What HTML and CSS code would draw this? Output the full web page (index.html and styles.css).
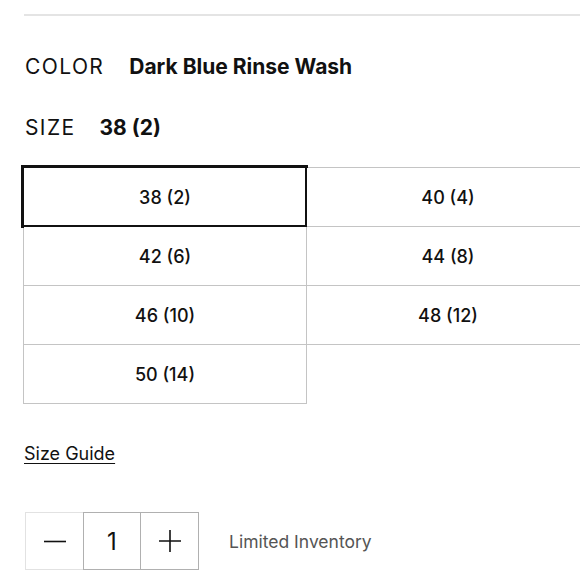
FILE: index.html
```html
<!DOCTYPE html>
<html>
<head>
<meta charset="utf-8">
<link rel="stylesheet" href="styles.css">
</head>
<body>
<div class="page">
  <hr class="rule">
  <div class="attr attr-color">
    <span class="attr-label">COLOR</span>
    <span class="attr-value">Dark Blue Rinse Wash</span>
  </div>
  <div class="attr attr-size">
    <span class="attr-label">SIZE</span>
    <span class="attr-value">38 (2)</span>
  </div>
  <div class="sizes">
    <button class="size selected">38 (2)</button>
    <button class="size">40 (4)</button>
    <button class="size">42 (6)</button>
    <button class="size">44 (8)</button>
    <button class="size">46 (10)</button>
    <button class="size">48 (12)</button>
    <button class="size">50 (14)</button>
  </div>
  <a class="guide" href="#">Size Guide</a>
  <div class="qty-row">
    <div class="qty">
      <button class="qty-btn minus" aria-label="decrease">
        <svg width="22" height="22" viewBox="0 0 22 22"><path d="M0 11.5H22" stroke="#111" stroke-width="1.6"/></svg>
      </button>
      <div class="qty-val">1</div>
      <button class="qty-btn plus" aria-label="increase">
        <svg width="22" height="22" viewBox="0 0 22 22"><path d="M0 11H22M11 0V22" stroke="#111" stroke-width="1.6"/></svg>
      </button>
    </div>
    <span class="stock">Limited Inventory</span>
  </div>
</div>
</body>
</html>
```
FILE: styles.css
```css
html, body {
  margin: 0;
  padding: 0;
  overflow: hidden;
  background: #fff;
}

body {
  font-family: Inter, Roboto, "Liberation Sans", sans-serif;
  color: #111;
}

.page {
  width: 620px;
  padding-left: 23px;
  padding-top: 14px;
}

.rule {
  margin: 0 0 0 1px;
  border: 0;
  height: 2px;
  background: #e4e4e4;
}

.attr {
  display: flex;
  align-items: baseline;
  gap: 25px;
  font-size: 21px;
  line-height: 24px;
}

.attr-color {
  margin-top: 39px;
}

.attr-size {
  margin-top: 37px;
  gap: 24px;
}

.attr-label {
  padding-left: 2px;
  letter-spacing: 1.4px;
  font-weight: 400;
}

.attr-value {
  font-weight: 700;
  font-size: 21px;
}

.sizes {
  margin-top: 27px;
  display: grid;
  grid-template-columns: 283px 283px;
  grid-auto-rows: 59px;
  border-top: 1px solid #c4c4c4;
  border-left: 1px solid #c4c4c4;
  width: max-content;
}

.size {
  position: relative;
  margin: 0;
  padding: 0;
  background: #fff;
  border: 0;
  border-right: 1px solid #c4c4c4;
  border-bottom: 1px solid #c4c4c4;
  font-family: inherit;
  font-size: 18px;
  font-weight: 500;
  color: #111;
  cursor: pointer;
}

.size.selected::after {
  content: "";
  position: absolute;
  top: -3px;
  left: -3px;
  right: -2px;
  bottom: -2px;
  border: 3px solid #111;
}

.guide {
  display: inline-block;
  margin-top: 39px;
  margin-left: 1px;
  font-size: 18px;
  color: #111;
  text-decoration: underline;
  text-underline-offset: 3px;
  text-decoration-thickness: 1px;
}

.qty-row {
  margin-top: 48px;
  display: flex;
  align-items: center;
  gap: 30px;
}

.qty {
  display: flex;
  margin-left: 2px;
}

.qty-btn,
.qty-val {
  box-sizing: border-box;
  width: 58px;
  height: 58px;
  display: flex;
  align-items: center;
  justify-content: center;
  background: #fff;
  padding: 0;
  margin: 0;
}

.qty-btn.minus {
  border: 1px solid #e2e2e2;
  border-right: 0;
}

.qty-val {
  border: 1px solid #b0b0b0;
  font-size: 24px;
  color: #111;
}

.qty-btn.plus {
  border: 1px solid #b0b0b0;
  border-left: 0;
}

.stock {
  font-size: 17.5px;
  color: #555;
}
```
